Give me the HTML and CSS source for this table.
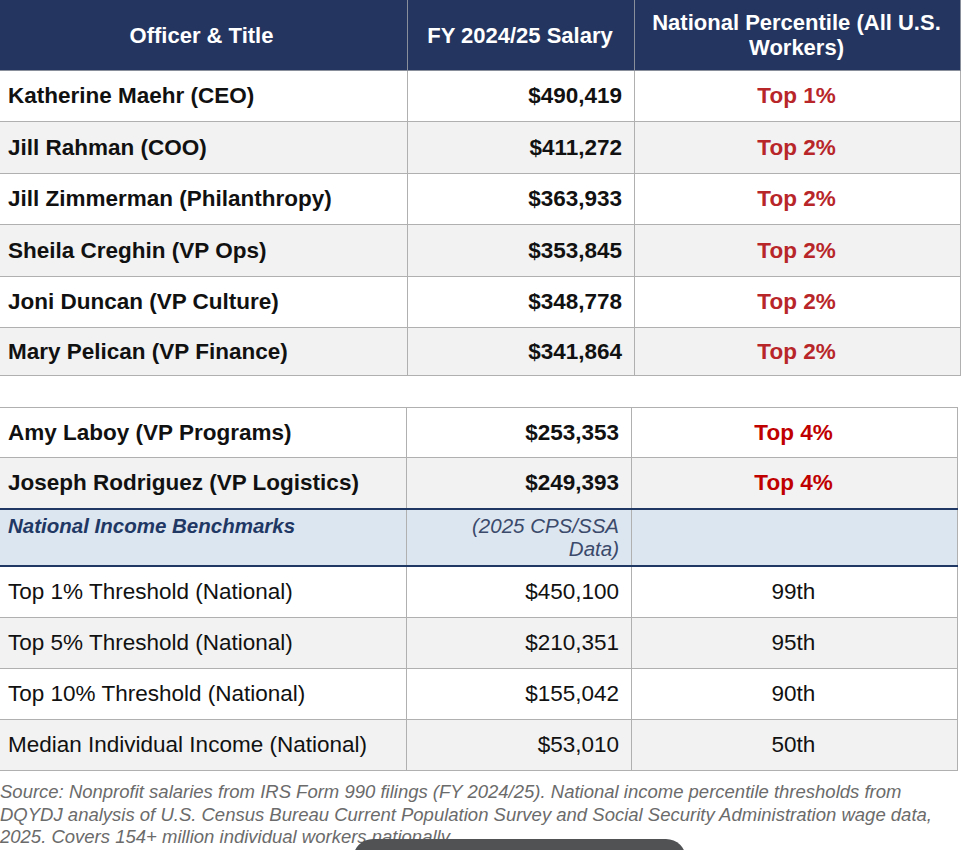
FILE: index.html
```html
<!DOCTYPE html>
<html>
<head>
<meta charset="utf-8">
<link rel="stylesheet" href="styles.css">
</head>
<body>
<div class="page">
  <table class="tbl tbl-top">
    <colgroup><col class="c1"><col class="c2"><col class="c3"></colgroup>
    <thead>
      <tr class="head">
        <th>Officer &amp; Title</th>
        <th>FY 2024/25 Salary</th>
        <th>National Percentile (All U.S. Workers)</th>
      </tr>
    </thead>
    <tbody>
      <tr class="r51"><td class="name">Katherine Maehr (CEO)</td><td class="sal">$490,419</td><td class="pct">Top 1%</td></tr>
      <tr class="alt r52"><td class="name">Jill Rahman (COO)</td><td class="sal">$411,272</td><td class="pct">Top 2%</td></tr>
      <tr class="r51"><td class="name">Jill Zimmerman (Philanthropy)</td><td class="sal">$363,933</td><td class="pct">Top 2%</td></tr>
      <tr class="alt r52"><td class="name">Sheila Creghin (VP Ops)</td><td class="sal">$353,845</td><td class="pct">Top 2%</td></tr>
      <tr class="r51"><td class="name">Joni Duncan (VP Culture)</td><td class="sal">$348,778</td><td class="pct">Top 2%</td></tr>
      <tr class="alt r48"><td class="name">Mary Pelican (VP Finance)</td><td class="sal">$341,864</td><td class="pct">Top 2%</td></tr>
    </tbody>
  </table>

  <table class="tbl tbl-bottom">
    <colgroup><col class="d1"><col class="d2"><col class="d3"></colgroup>
    <tbody>
      <tr class="r50"><td class="name">Amy Laboy (VP Programs)</td><td class="sal">$253,353</td><td class="pct pct2">Top 4%</td></tr>
      <tr class="alt r51"><td class="name">Joseph Rodriguez (VP Logistics)</td><td class="sal">$249,393</td><td class="pct pct2">Top 4%</td></tr>
      <tr class="bench"><td class="bench-title">National Income Benchmarks</td><td class="bench-src">(2025 CPS/SSA<br>Data)</td><td></td></tr>
      <tr class="plain r52"><td class="name">Top 1% Threshold (National)</td><td class="sal">$450,100</td><td class="mid">99th</td></tr>
      <tr class="plain alt r51"><td class="name">Top 5% Threshold (National)</td><td class="sal">$210,351</td><td class="mid">95th</td></tr>
      <tr class="plain r51"><td class="name">Top 10% Threshold (National)</td><td class="sal">$155,042</td><td class="mid">90th</td></tr>
      <tr class="plain alt r51"><td class="name">Median Individual Income (National)</td><td class="sal">$53,010</td><td class="mid">50th</td></tr>
    </tbody>
  </table>

  <p class="source">Source: Nonprofit salaries from IRS Form 990 filings (FY 2024/25). National income percentile thresholds from<br>DQYDJ analysis of U.S. Census Bureau Current Population Survey and Social Security Administration wage data,<br>2025. Covers 154+ million individual workers nationally.</p>
</div>
<div class="pill"></div>
</body>
</html>
```

FILE: styles.css
```css
html, body {
  margin: 0;
  padding: 0;
  background: #ffffff;
}
body {
  width: 966px;
  height: 850px;
  overflow: hidden;
  position: relative;
  font-family: "Liberation Sans", Arial, Helvetica, sans-serif;
  color: #111;
}
.page {
  margin-left: -3px;
  width: 969px;
}
.tbl {
  border-collapse: collapse;
  table-layout: fixed;
}
.tbl-top { width: 963px; }
.tbl-bottom { width: 960px; margin-top: 31px; }
.c1 { width: 410px; }
.c2 { width: 227px; }
.c3 { width: 326px; }
.d1 { width: 409px; }
.d2 { width: 225px; }
.d3 { width: 326px; }

.tbl td, .tbl th {
  border: 1px solid #b0b0b0;
  font-size: 22.5px;
  line-height: 26px;
  padding: 0 12px 0 10px;
}
.head th {
  background: #243660;
  color: #ffffff;
  font-weight: bold;
  height: 70px;
  text-align: center;
  font-size: 22px;
  line-height: 25px;
  border-color: #8a8f9c;
  border-top: none;
}
.r48 { height: 48px; }
.r50 { height: 50px; }
.r51 { height: 51px; }
.r52 { height: 52px; }
.alt td { background: #f2f2f2; }
.name { font-weight: bold; text-align: left; }
.sal { font-weight: bold; text-align: right; }
.pct { font-weight: bold; text-align: center; color: #b8262a; }
.pct2 { color: #c00000; }

.bench td {
  background: #dce6f1;
  border-top: 2px solid #1f3864;
  border-bottom: 2px solid #1f3864;
  height: 51px;
  vertical-align: baseline;
  padding-top: 4px;
}
.tbl .bench-title {
  color: #1f3864;
  font-weight: bold;
  font-style: italic;
  font-size: 20.5px;
  line-height: 23px;
}
.tbl .bench-src {
  color: #3b4a6b;
  font-style: italic;
  text-align: right;
  font-size: 20.5px;
  line-height: 23px;
}
.plain .name,
.plain .sal,
.plain .mid { font-weight: normal; }
.mid { text-align: center; }

.source {
  margin: 10px 0 0 3px;
  font-size: 18.5px;
  line-height: 22.5px;
  font-style: italic;
  color: #6b6b6b;
  white-space: nowrap;
}
.pill {
  position: absolute;
  left: 353px;
  top: 839px;
  width: 333px;
  height: 40px;
  border-radius: 20px;
  background: #505254;
}
```
